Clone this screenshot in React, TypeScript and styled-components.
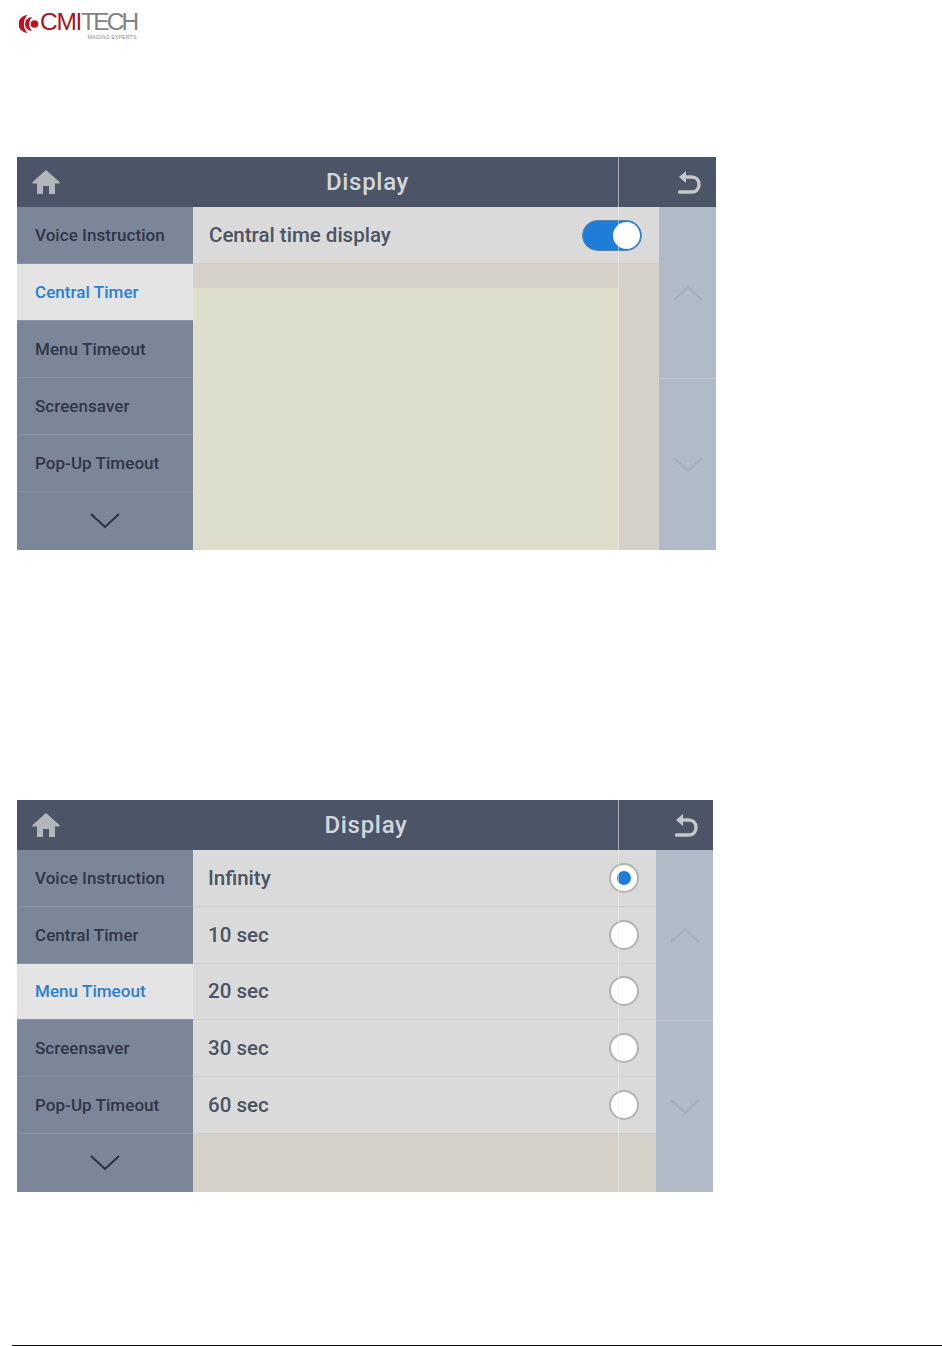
import React from "react";
import styled, { createGlobalStyle } from "styled-components";

const Global = createGlobalStyle`
  html, body { margin: 0; padding: 0; background: #fff; }
  body { font-family: Roboto, "Liberation Sans", sans-serif; }
`;

const Page = styled.div`
  width: 942px;
  height: 1346px;
  display: flex;
  flex-direction: column;
  overflow: hidden;
`;

const LogoBar = styled.div`
  height: 47px;
  padding: 9px 0 0 19px;
  box-sizing: border-box;
  display: flex;
  align-items: flex-start;
  gap: 1px;
`;

const LogoWords = styled.div`
  display: flex;
  flex-direction: column;
  align-items: flex-end;
  font-family: "Liberation Sans", sans-serif;
`;

const LogoMain = styled.div`
  font-size: 24.5px;
  line-height: 26px;
  letter-spacing: -1.3px;
  color: #a8141d;
  height: 25px;
  white-space: nowrap;
`;

const LogoThin = styled.span`
  color: #6d6d6d;
  font-weight: 400;
  letter-spacing: -2.8px;
  opacity: 0.85;
`;

const LogoTag = styled.div`
  font-size: 5.3px;
  line-height: 6px;
  color: #8a8a8a;
  letter-spacing: 0.1px;
`;

const Panel = styled.section<{ $width: number; $top: number; $height: number }>`
  position: relative;
  width: ${(p) => p.$width}px;
  height: ${(p) => p.$height}px;
  margin: ${(p) => p.$top}px 0 0 17px;
  display: flex;
  flex-direction: column;
  flex: none;
`;

const Header = styled.header`
  height: 50px;
  flex: none;
  background: #4c5567;
  display: flex;
  align-items: center;
  justify-content: space-between;
  padding: 0 15px 0 14px;
  box-sizing: border-box;
`;

const Title = styled.h1`
  margin: 0 0 0 -1px;
  font-size: 24px;
  font-weight: 500;
  letter-spacing: 0.7px;
  color: #d3d6db;
`;

const Body = styled.div`
  flex: 1;
  display: flex;
  min-height: 0;
`;

const Sidebar = styled.nav`
  width: 176px;
  flex: none;
  background: #7c8699;
  display: flex;
  flex-direction: column;
`;

const MenuItem = styled.div<{ $active?: boolean; $rowHeight: number }>`
  height: ${(p) => p.$rowHeight}px;
  flex: none;
  box-sizing: border-box;
  padding-left: 18px;
  display: flex;
  align-items: center;
  font-size: 17px;
  font-weight: 500;
  letter-spacing: 0.05px;
  color: ${(p) => (p.$active ? "#2a7fd0" : "#2e3648")};
  background: ${(p) => (p.$active ? "#e4e4e4" : "#7c8699")};
  border-bottom: 1px solid #8a93a5;
`;

const MenuMore = styled.div`
  flex: 1;
  display: flex;
  align-items: center;
  justify-content: center;
`;

const Content = styled.div`
  flex: 1;
  min-width: 0;
  background: #d5d1c9;
  display: flex;
  flex-direction: column;
`;

const Row = styled.div<{ $rowHeight: number }>`
  height: ${(p) => p.$rowHeight}px;
  flex: none;
  box-sizing: border-box;
  background: #dadada;
  border-bottom: 1px solid #cdcdcb;
  display: flex;
  align-items: center;
  justify-content: space-between;
  padding: 0 17px 0 16px;
  font-size: 20.5px;
  font-weight: 500;
  color: #4c5362;
`;

const RadioRow = styled(Row)`
  padding: 0 17px 0 15px;
`;

const Band = styled.div`
  height: 24px;
  flex: none;
`;

const Blank = styled.div`
  flex: 1;
  width: 425px;
  background: #dddecb;
`;

const Rail = styled.aside`
  width: 57px;
  flex: none;
  background: #b1bbc8;
  display: flex;
  flex-direction: column;
`;

const RailButton = styled.div<{ $height?: number }>`
  flex: ${(p) => (p.$height ? `0 0 ${p.$height}px` : "1")};
  box-sizing: border-box;
  display: flex;
  align-items: center;
  justify-content: center;
  & + & {
    border-top: 1px solid #c3cad4;
  }
`;

const Toggle = styled.div`
  width: 60px;
  height: 31px;
  box-sizing: border-box;
  border-radius: 16px;
  background: #1f7dd8;
  border: 1px solid #5b84ad;
  display: flex;
  align-items: center;
  justify-content: flex-end;
  padding-right: 1px;
`;

const Knob = styled.div`
  width: 27px;
  height: 27px;
  border-radius: 50%;
  background: #fff;
`;

const Radio = styled.div`
  width: 30px;
  height: 30px;
  box-sizing: border-box;
  border-radius: 50%;
  background: #fff;
  border: 2px solid #b3b3b0;
  display: flex;
  align-items: center;
  justify-content: center;
`;

const RadioDot = styled.div`
  width: 14px;
  height: 14px;
  border-radius: 50%;
  background: #1f7dd8;
`;

const Divider = styled.div`
  position: absolute;
  left: 601px;
  top: 0;
  bottom: 0;
  width: 1px;
  background: rgba(238, 238, 236, 0.55);
`;

const FooterLine = styled.div`
  position: absolute;
  left: 12px;
  right: 0;
  top: 1345px;
  height: 1px;
  background: #111;
`;

const LogoMark = () => (
  <svg width="20" height="20" viewBox="0 0 20 20" style={{ marginTop: 5 }}>
    <path d="M8.5 1A9 9 0 0 0 8.5 19A13 13 0 0 1 8.5 1Z" fill="#c1121c" />
    <path d="M13 3A7 7 0 0 0 13 17A10 10 0 0 1 13 3Z" fill="#c1121c" />
    <circle cx="15.5" cy="10" r="3.8" fill="#c1121c" />
  </svg>
);

const HomeIcon = () => (
  <svg width="30" height="26" viewBox="0 0 30 26">
    <path d="M15 1L1 13.5L2 14.5H6V25H12V17H18V25H24V14.5H28L29 13.5Z" fill="#b3b6bb" />
  </svg>
);

const BackIcon = () => (
  <svg width="26" height="24" viewBox="0 0 26 24" fill="none">
    <path d="M9 7H16.5C21 7 24 10 24 14.5C24 19 21 22 16.5 22H4.5" stroke="#c4c7cc" strokeWidth="3.4" strokeLinecap="round" />
    <path d="M11 1V13L4 7Z" fill="#c4c7cc" />
  </svg>
);

const Chevron = ({ up, color, width = 2 }: { up?: boolean; color: string; width?: number }) => (
  <svg width="30" height="16" viewBox="0 0 30 16" fill="none">
    <path d={up ? "M1 15L15 2L29 15" : "M1 1L15 14L29 1"} stroke={color} strokeWidth={width} />
  </svg>
);

const MENU = ["Voice Instruction", "Central Timer", "Menu Timeout", "Screensaver", "Pop-Up Timeout"];
const OPTIONS = ["Infinity", "10 sec", "20 sec", "30 sec", "60 sec"];

const Shell = ({
  width,
  top,
  height,
  active,
  rowHeight,
  split,
  children,
}: {
  width: number;
  top: number;
  height: number;
  active: string;
  rowHeight: number;
  split: number;
  children: React.ReactNode;
}) => (
  <Panel $width={width} $top={top} $height={height}>
    <Header>
      <HomeIcon />
      <Title>Display</Title>
      <BackIcon />
    </Header>
    <Body>
      <Sidebar>
        {MENU.map((m) => (
          <MenuItem key={m} $active={m === active} $rowHeight={rowHeight}>
            {m}
          </MenuItem>
        ))}
        <MenuMore>
          <Chevron color="#2a3244" />
        </MenuMore>
      </Sidebar>
      <Content>{children}</Content>
      <Rail>
        <RailButton $height={split}>
          <Chevron up color="#a3aebd" />
        </RailButton>
        <RailButton>
          <Chevron color="#a3aebd" />
        </RailButton>
      </Rail>
    </Body>
    <Divider />
  </Panel>
);

export default function App() {
  return (
    <Page>
      <Global />
      <LogoBar>
        <LogoMark />
        <LogoWords>
          <LogoMain>
            CMI<LogoThin>TECH</LogoThin>
          </LogoMain>
          <LogoTag>MAGING EXPERTS</LogoTag>
        </LogoWords>
      </LogoBar>
      <Shell width={699} top={110} height={393} active="Central Timer" rowHeight={57} split={171}>
        <Row $rowHeight={57}>
          Central time display
          <Toggle>
            <Knob />
          </Toggle>
        </Row>
        <Band />
        <Blank />
      </Shell>
      <Shell width={696} top={250} height={392} active="Menu Timeout" rowHeight={56.8} split={170}>
        {OPTIONS.map((o, i) => (
          <RadioRow key={o} $rowHeight={56.8}>
            {o}
            <Radio>{i === 0 && <RadioDot />}</Radio>
          </RadioRow>
        ))}
      </Shell>
      <FooterLine />
    </Page>
  );
}
